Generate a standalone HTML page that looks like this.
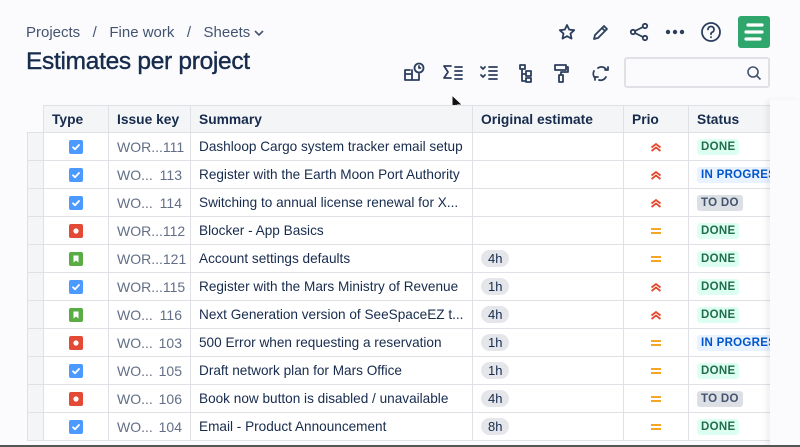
<!DOCTYPE html>
<html><head><meta charset="utf-8"><style>
*{box-sizing:border-box;margin:0;padding:0}
body{width:800px;height:447px;overflow:hidden;background:#fbfbfd;font-family:"Liberation Sans",sans-serif;color:#172b4d;position:relative}
.bc{position:absolute;left:26px;top:24px;font-size:15px;color:#44546f}
h1{position:absolute;left:26px;top:48px;font-size:24.5px;font-weight:normal;color:#172b4d;letter-spacing:-0.3px;-webkit-text-stroke:0.4px #172b4d}
.ic{position:absolute}
table{position:absolute;left:27px;top:105px;border-collapse:collapse;font-size:13.6px;table-layout:fixed;width:760px}
td,th{border:1px solid #dfe1e6;height:28px;white-space:nowrap;overflow:hidden;padding:0 8px;text-align:left}
th{background:#f4f5f7;font-weight:bold;font-size:13.8px;color:#172b4d;height:27px}
td{background:#fff;color:#172b4d}
td.g{background:#f4f5f7}
th.g{background:#fbfbfd;border:none;border-right:1px solid #dfe1e6}
.k{color:#626f86;display:flex;justify-content:space-between;font-size:14px}
.ty{display:block;width:14px;height:14px;margin:0 auto}
.est{display:inline-block;background:#e4e6ea;border-radius:9px;padding:1px 7px;font-size:13px}
.lz{display:inline-block;font-size:11.5px;font-weight:bold;padding:2px 4px;border-radius:3px;letter-spacing:.3px}
.dn{background:#dcfff1;color:#216e4e}
.ip{background:#e9f2ff;color:#0055cc}
.td{background:#dcdfe4;color:#44546f}
.p{text-align:center;padding:0}
.p svg{display:block;margin:0 auto}
.shade{position:absolute;left:770px;top:100px;width:30px;height:347px;background:#fbfbfd;box-shadow:-4px 0 5px rgba(0,0,0,.06)}
</style></head><body>
<svg width="0" height="0" style="position:absolute">
<defs>
<symbol id="st" viewBox="0 0 14 14"><rect width="14" height="14" rx="2" fill="#4c9aff"/><path d="M4 7.3l2 2 4-4.3" stroke="#fff" stroke-width="1.8" fill="none" stroke-linecap="round" stroke-linejoin="round"/></symbol>
<symbol id="bg" viewBox="0 0 14 14"><rect width="14" height="14" rx="2" fill="#e34935"/><circle cx="7" cy="7" r="2.6" fill="#fff"/></symbol>
<symbol id="sy" viewBox="0 0 14 14"><rect width="14" height="14" rx="2" fill="#5aac44"/><path d="M4.5 3.5h5v7L7 8.5l-2.5 2z" fill="#fff"/></symbol>
<symbol id="hi" viewBox="0 0 14 14"><path d="M2.5 7.5L7 4l4.5 3.5M2.5 11L7 7.5l4.5 3.5" stroke="#e5492d" stroke-width="1.8" fill="none"/></symbol>
<symbol id="md" viewBox="0 0 14 14"><path d="M2 5h10M2 9h10" stroke="#f5a623" stroke-width="2" fill="none"/></symbol>
</defs></svg>
<div class="bc">Projects &nbsp;&nbsp;/&nbsp;&nbsp; Fine work &nbsp;&nbsp;/&nbsp;&nbsp; Sheets <svg width="10" height="8" style="vertical-align:middle"><path d="M1 2l4 4 4-4" stroke="#44546f" stroke-width="1.6" fill="none"/></svg></div>
<h1>Estimates per project</h1>
<svg class="ic" style="left:556px;top:21px" width="220" height="30" fill="none" stroke="#2c3e5d" stroke-width="1.8" stroke-linecap="round" stroke-linejoin="round">
<path d="M11 4l2.2 4.6 5 .6-3.7 3.4 1 5-4.5-2.5-4.5 2.5 1-5L3.8 9.2l5-.6z"/>
<path d="M38 18l1-4 9-9 3 3-9 9z M46 7l3 3"/>
<circle cx="77" cy="11" r="2.2"/><circle cx="89" cy="5" r="2.2"/><circle cx="89" cy="17" r="2.2"/><path d="M79 10l8-4M79 12l8 4"/>
<circle cx="112" cy="11" r="1.3" fill="#2c3e5d"/><circle cx="119" cy="11" r="1.3" fill="#2c3e5d"/><circle cx="126" cy="11" r="1.3" fill="#2c3e5d"/>
<circle cx="155" cy="11" r="9"/><path d="M152 8.5a3 3 0 1 1 4 2.8c-1 .4-1 1-1 2M155 16v.3"/>
</svg>
<div style="position:absolute;left:738px;top:16px;width:32px;height:32px;background:#2ea66c;border-radius:3px"></div>
<svg class="ic" style="left:738px;top:16px" width="32" height="32" fill="none" stroke="#fff" stroke-width="3.2" stroke-linecap="round"><path d="M10 9h14M8 16h16M8 23h14"/></svg>
<svg class="ic" style="left:403px;top:61px" width="220" height="24" fill="none" stroke="#2c3e5d" stroke-width="1.8" stroke-linecap="round" stroke-linejoin="round">
<path d="M2 9v10h14v-6M2 13h7M9 9v10M2 9h5"/><circle cx="16" cy="7" r="4.5"/><path d="M16 5v2h1.5"/>
<path d="M48 5h-7l4 6-4 6h7M52 6h7M52 10h7M52 14h7M52 18h7"/>
<path d="M78 6l2 2 2-2M78 14l2 2 2-2M86 6h8M86 10h8M86 14h8M86 18h8"/>
<path d="M117 4h5v4h-5zM119 8v12h4M119 13h4M123 10h5v5h-5zM123 17h5v4h-5z"/>
<path d="M152 4h11v5h-11zM163 6h2v5h-7v3M156 14h4v7h-4z"/>
<path d="M195 7a6 6 0 0 1 8 1M205 6v3h-3M191 10a6 6 0 0 0 1 7M196 19a6 6 0 0 0 7-3M192 19v-3h3"/>
</svg>
<div style="position:absolute;left:624px;top:57px;width:146px;height:31px;border:2px solid #dfe1e6;border-radius:3px;background:#fbfbfd"></div>
<svg class="ic" style="left:746px;top:65px" width="16" height="16" fill="none" stroke="#44546f" stroke-width="1.6"><circle cx="7" cy="7" r="5"/><path d="M11 11l3.5 3.5"/></svg>
<svg class="ic" style="left:450px;top:94px" width="14" height="20"><path d="M2 1v14l3.5-3.5 2.5 5.5 2-1-2.5-5h5z" fill="#111" stroke="#fff" stroke-width="1"/></svg>
<table>
<colgroup><col style="width:16px"><col style="width:65px"><col style="width:82px"><col style="width:282px"><col style="width:151px"><col style="width:65px"><col style="width:99px"></colgroup>
<tr><th class="g"></th><th>Type</th><th>Issue key</th><th>Summary</th><th>Original estimate</th><th>Prio</th><th>Status</th></tr>
<tr><td class="g"></td><td><svg class="ty"><use href="#st"/></svg></td><td><div class="k"><span>WOR...</span><span>111</span></div></td><td>Dashloop Cargo system tracker email setup</td><td></td><td class="p"><svg width="14" height="14"><use href="#hi"/></svg></td><td><span class="lz dn">DONE</span></td></tr>
<tr><td class="g"></td><td><svg class="ty"><use href="#st"/></svg></td><td><div class="k"><span>WO...</span><span>113</span></div></td><td>Register with the Earth Moon Port Authority</td><td></td><td class="p"><svg width="14" height="14"><use href="#hi"/></svg></td><td><span class="lz ip">IN PROGRESS</span></td></tr>
<tr><td class="g"></td><td><svg class="ty"><use href="#st"/></svg></td><td><div class="k"><span>WO...</span><span>114</span></div></td><td>Switching to annual license renewal for X...</td><td></td><td class="p"><svg width="14" height="14"><use href="#hi"/></svg></td><td><span class="lz td">TO DO</span></td></tr>
<tr><td class="g"></td><td><svg class="ty"><use href="#bg"/></svg></td><td><div class="k"><span>WOR...112</span></div></td><td>Blocker - App Basics</td><td></td><td class="p"><svg width="14" height="14"><use href="#md"/></svg></td><td><span class="lz dn">DONE</span></td></tr>
<tr><td class="g"></td><td><svg class="ty"><use href="#sy"/></svg></td><td><div class="k"><span>WOR...121</span></div></td><td>Account settings defaults</td><td><span class="est">4h</span></td><td class="p"><svg width="14" height="14"><use href="#md"/></svg></td><td><span class="lz dn">DONE</span></td></tr>
<tr><td class="g"></td><td><svg class="ty"><use href="#st"/></svg></td><td><div class="k"><span>WOR...115</span></div></td><td>Register with the Mars Ministry of Revenue</td><td><span class="est">1h</span></td><td class="p"><svg width="14" height="14"><use href="#hi"/></svg></td><td><span class="lz dn">DONE</span></td></tr>
<tr><td class="g"></td><td><svg class="ty"><use href="#sy"/></svg></td><td><div class="k"><span>WO...</span><span>116</span></div></td><td>Next Generation version of SeeSpaceEZ t...</td><td><span class="est">4h</span></td><td class="p"><svg width="14" height="14"><use href="#hi"/></svg></td><td><span class="lz dn">DONE</span></td></tr>
<tr><td class="g"></td><td><svg class="ty"><use href="#bg"/></svg></td><td><div class="k"><span>WO...</span><span>103</span></div></td><td>500 Error when requesting a reservation</td><td><span class="est">1h</span></td><td class="p"><svg width="14" height="14"><use href="#md"/></svg></td><td><span class="lz ip">IN PROGRESS</span></td></tr>
<tr><td class="g"></td><td><svg class="ty"><use href="#st"/></svg></td><td><div class="k"><span>WO...</span><span>105</span></div></td><td>Draft network plan for Mars Office</td><td><span class="est">1h</span></td><td class="p"><svg width="14" height="14"><use href="#md"/></svg></td><td><span class="lz dn">DONE</span></td></tr>
<tr><td class="g"></td><td><svg class="ty"><use href="#bg"/></svg></td><td><div class="k"><span>WO...</span><span>106</span></div></td><td>Book now button is disabled / unavailable</td><td><span class="est">4h</span></td><td class="p"><svg width="14" height="14"><use href="#md"/></svg></td><td><span class="lz td">TO DO</span></td></tr>
<tr><td class="g"></td><td><svg class="ty"><use href="#st"/></svg></td><td><div class="k"><span>WO...</span><span>104</span></div></td><td>Email - Product Announcement</td><td><span class="est">8h</span></td><td class="p"><svg width="14" height="14"><use href="#md"/></svg></td><td><span class="lz dn">DONE</span></td></tr>
</table>
<div class="shade"></div>
<div style="position:absolute;left:0;top:445px;width:800px;height:2px;background:#555"></div>
</body></html>
